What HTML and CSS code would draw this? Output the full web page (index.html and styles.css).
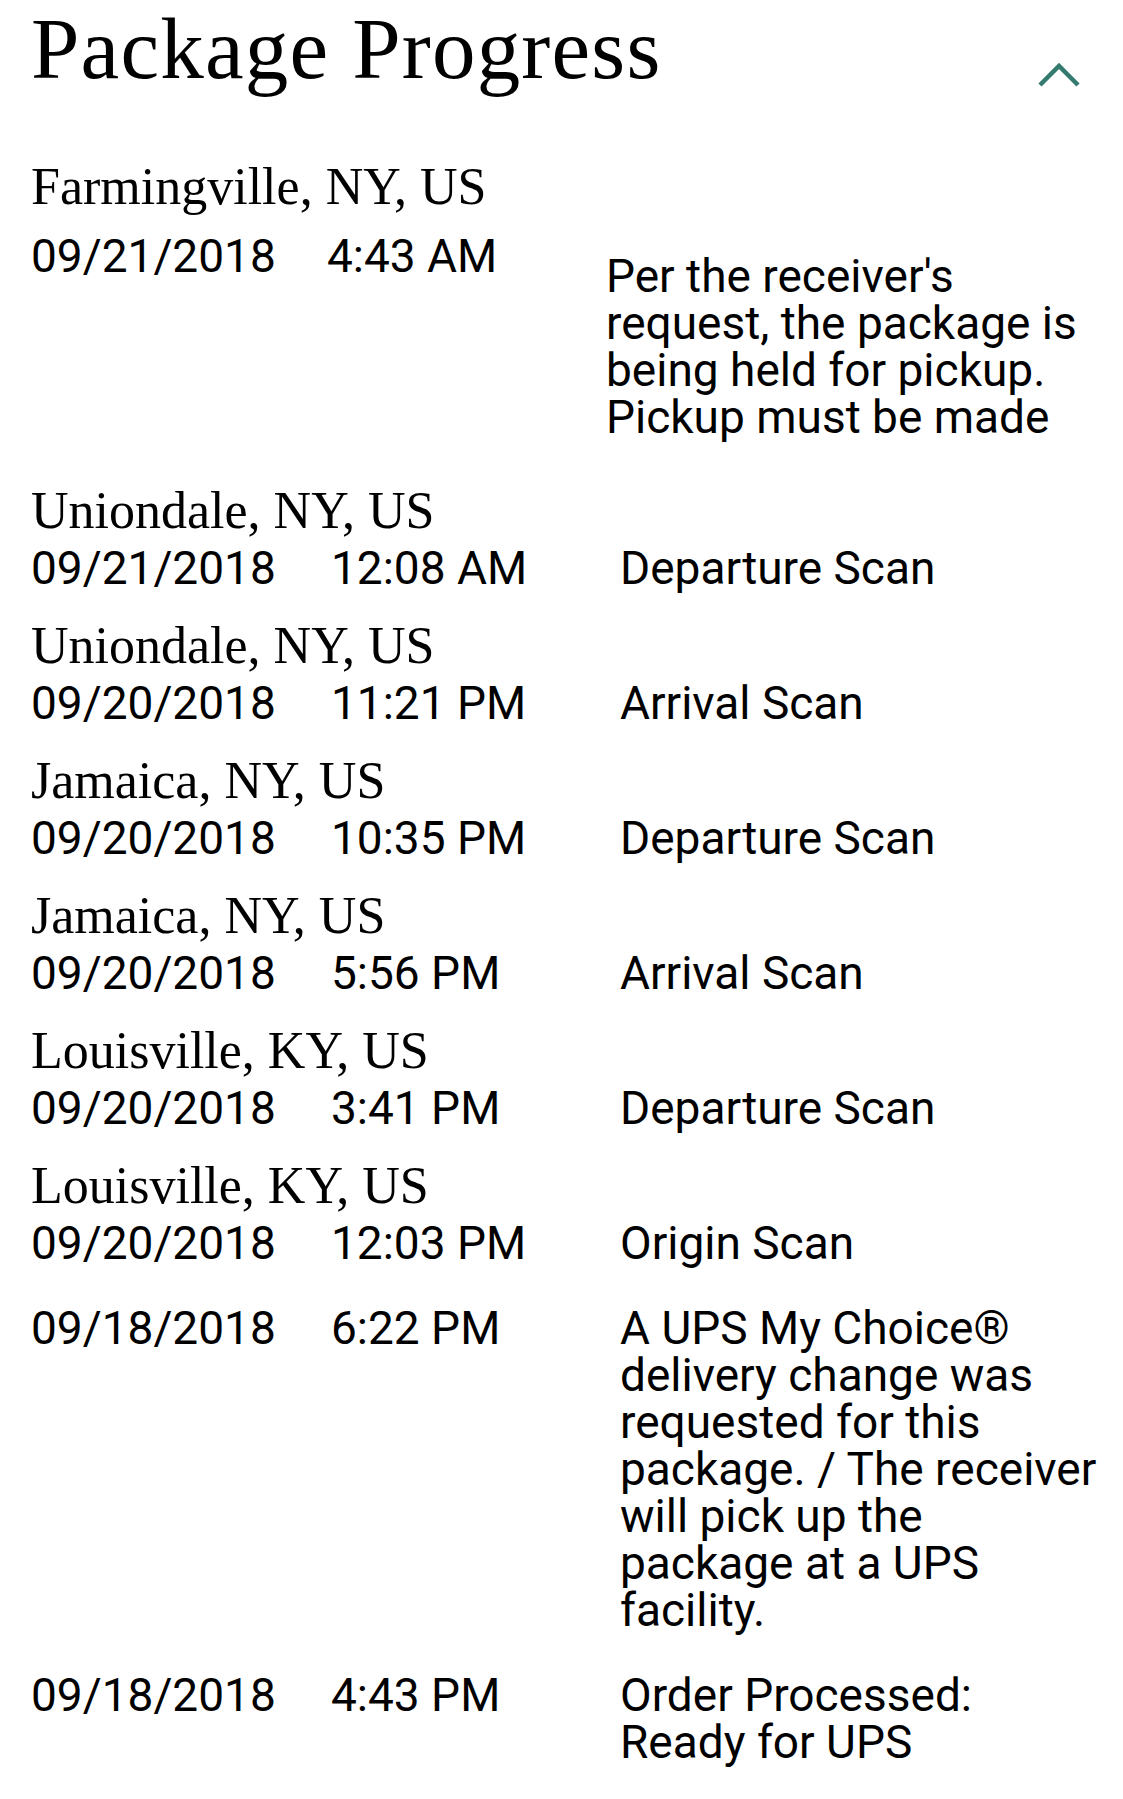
FILE: index.html
```html
<!DOCTYPE html>
<html lang="en">
<head>
    <meta charset="UTF-8">
    <meta name="viewport" content="width=device-width, initial-scale=1.0">
    <title>Package Progress</title>
    <link rel="stylesheet" href="styles.css">
</head>
<body>
    <div class="page">
        <header class="progress-head">
            <h1>Package Progress</h1>
            <button class="toggle" aria-label="Collapse package progress">
                <svg viewBox="0 0 44 26" width="44" height="26">
                    <polyline points="3,23 22,4 41,23" fill="none" stroke="#357a6f" stroke-width="4.5"/>
                </svg>
            </button>
        </header>
        <div class="activity">
            <div class="entry entry--current">
                <div class="city">Farmingville, NY, US</div>
                <div class="row">
                    <span class="date">09/21/2018</span>
                    <span class="time">4:43 AM</span>
                    <span class="desc">Per the receiver's request, the package is being held for pickup. Pickup must be made</span>
                </div>
            </div>
            <div class="entry">
                <div class="city">Uniondale, NY, US</div>
                <div class="row">
                    <span class="date">09/21/2018</span>
                    <span class="time">12:08 AM</span>
                    <span class="desc">Departure Scan</span>
                </div>
            </div>
            <div class="entry">
                <div class="city">Uniondale, NY, US</div>
                <div class="row">
                    <span class="date">09/20/2018</span>
                    <span class="time">11:21 PM</span>
                    <span class="desc">Arrival Scan</span>
                </div>
            </div>
            <div class="entry">
                <div class="city">Jamaica, NY, US</div>
                <div class="row">
                    <span class="date">09/20/2018</span>
                    <span class="time">10:35 PM</span>
                    <span class="desc">Departure Scan</span>
                </div>
            </div>
            <div class="entry">
                <div class="city">Jamaica, NY, US</div>
                <div class="row">
                    <span class="date">09/20/2018</span>
                    <span class="time">5:56 PM</span>
                    <span class="desc">Arrival Scan</span>
                </div>
            </div>
            <div class="entry">
                <div class="city">Louisville, KY, US</div>
                <div class="row">
                    <span class="date">09/20/2018</span>
                    <span class="time">3:41 PM</span>
                    <span class="desc">Departure Scan</span>
                </div>
            </div>
            <div class="entry">
                <div class="city">Louisville, KY, US</div>
                <div class="row">
                    <span class="date">09/20/2018</span>
                    <span class="time">12:03 PM</span>
                    <span class="desc">Origin Scan</span>
                </div>
            </div>
            <div class="entry entry--nocity">
                <div class="row">
                    <span class="date">09/18/2018</span>
                    <span class="time">6:22 PM</span>
                    <span class="desc">A UPS My Choice® delivery change was requested for this package. / The receiver will pick up the package at a UPS facility.</span>
                </div>
            </div>
            <div class="entry entry--nocity">
                <div class="row">
                    <span class="date">09/18/2018</span>
                    <span class="time">4:43 PM</span>
                    <span class="desc">Order Processed: Ready for UPS</span>
                </div>
            </div>
        </div>
    </div>
</body>
</html>
```

FILE: styles.css
```css
body {
    margin: 0;
    background: #ffffff;
    color: #000000;
}
.page {
    padding: 0 20px 0 31px;
}
.progress-head {
    display: flex;
    justify-content: space-between;
    align-items: flex-start;
    height: 86px;
}
.progress-head h1 {
    margin: 0;
    font: 400 87px/97px "Liberation Serif", serif;
    letter-spacing: 1.2px;
}
.toggle {
    display: block;
    width: 44px;
    height: 26px;
    margin: 62px 22px 0 0;
    padding: 0;
    border: 0;
    background: none;
    cursor: pointer;
}
.toggle svg {
    display: block;
}
.activity {
    margin-top: 76px;
}
.entry {
    padding-bottom: 29px;
}
.entry--current {
    padding-bottom: 45px;
}
.entry--nocity {
    padding-top: 9px;
}
.city {
    margin-bottom: 9px;
    font: 400 52px/50px "Liberation Serif", serif;
}
.entry--current .city {
    margin-bottom: 21px;
}
.row {
    display: grid;
    grid-template-columns: 300px 289px 1fr;
    font: 400 46px/47px Roboto, sans-serif;
}
.entry--current .row {
    grid-template-columns: 296px 279px 1fr;
}
.entry--current .desc {
    padding-top: 20px;
}
```
